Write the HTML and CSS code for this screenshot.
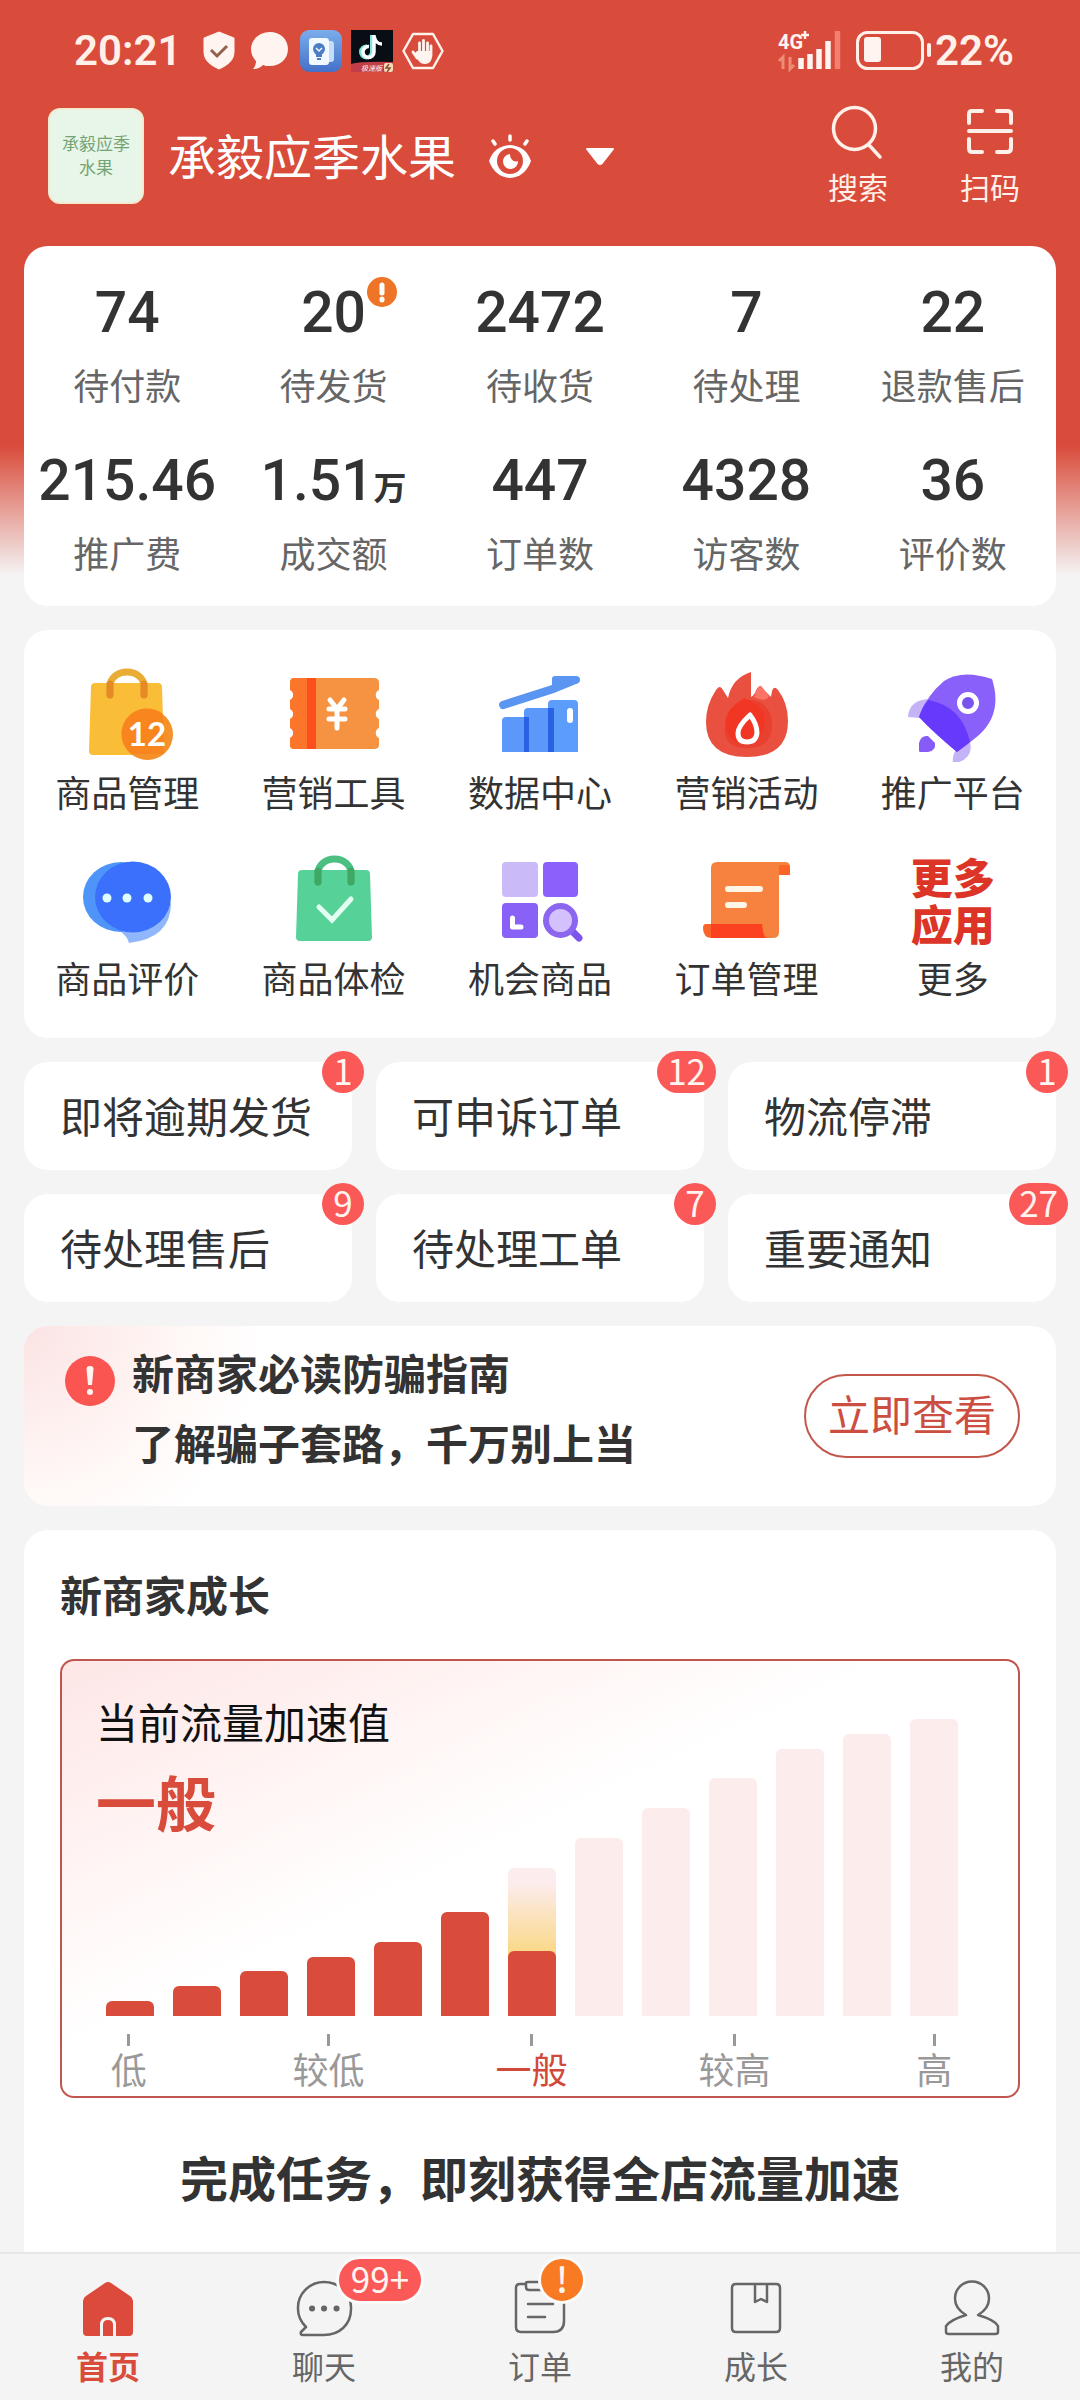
FILE: index.html
```html
<!DOCTYPE html>
<html lang="zh-CN">
<head>
<meta charset="utf-8">
<meta name="viewport" content="width=device-width, initial-scale=1">
<title>承毅应季水果</title>
<link rel="stylesheet" href="styles.css">
</head>
<body>
<div class="page">
  <div class="status">
    <span class="status-time">20:21</span>
    <svg class="status-icon" viewBox="0 0 42 42"><path d="M21 2 36 8v14c0 8-6 13-15 17C12 35 6 30 6 22V8z" fill="#fff4f0" stroke="#fff4f0" stroke-width="1" stroke-linejoin="round"/><path d="m13 20 6 6 10-10" fill="none" stroke="#93604f" stroke-width="3"/></svg>
    <svg class="status-icon" viewBox="0 0 42 42"><path d="M21 2c10 0 18 7 18 17s-8 17-18 17c-3 0-5 0-7-1-3 3-6 4-10 4 2-2 3-5 3-8-3-3-5-7-5-12C2 9 11 2 21 2z" fill="#fff4f0"/></svg>
    <svg class="status-icon" viewBox="0 0 42 42"><defs><linearGradient id="app" x2="0" y2="1"><stop stop-color="#7badeb"/><stop offset="1" stop-color="#4470c8"/></linearGradient></defs><rect width="42" height="42" rx="9" fill="url(#app)"/><path d="M28 11h3q3 0 3 3v15q0 3-3 3h-3z" fill="#c5dcf6"/><rect x="9" y="8" width="20" height="27" rx="3" fill="#f1f8ff"/><circle cx="19" cy="19" r="6" fill="#4b7cc4"/><path d="M16 23h6v4h-6zM17 28h4v2h-4z" fill="#4b7cc4"/><path d="m16 18 3 3 3-3" fill="none" stroke="#f1f8ff" stroke-width="1.5"/></svg>
    <svg class="status-icon" viewBox="0 0 42 42"><path fill="#090d14" d="M0 0h42v42H0z"/><path d="M0 34q10-3 42-2v10H0z" fill="#c33d48"/><path d="M21 5v17a5.500 5.500 0 1 1-5-5.500" fill="none" stroke="#7fe3e0" stroke-width="4"/><path d="M23 5v17a5.500 5.500 0 1 1-5-5.500M23 6c1 5 4 8 8 8" fill="none" stroke="#fff" stroke-width="3.500"/><rect x="33" y="33" width="9" height="9" rx="2" fill="#f8d9b4"/><path d="m38 34-3 4h4l-3 4" fill="none" stroke="#84513d" stroke-width="1.500"/><text x="10" y="41" class="status-tag">极速版</text></svg>
    <svg class="status-icon" viewBox="0 0 42 42"><path d="m11 4h20l9.500 17L31 38H11L1.500 21z" fill="none" stroke="#fff0ea" stroke-width="2.500" stroke-linejoin="round"/><path d="M15 28 11 22M17.500 24V13M21.500 23V10.500M25.500 24V13M29 26V16" stroke="#fff4f0" stroke-width="2.800" stroke-linecap="round"/><path d="M15 21h15v5c0 5-3 8-7 8-3 0-5-1-7-4l-4-6z" fill="#fff4f0"/></svg>
    <span class="spacer"></span>
    <svg class="status-signal" viewBox="0 0 64 42"><text x="0" y="19" class="signal-text">4G</text><path d="M27 1v8M23 5h8" stroke="#fff4f0" stroke-width="2.500"/><path d="M5 39V27l-4 4M12 27v12l4-4" fill="none" stroke="#ee8c77" stroke-width="3"/><path d="M23 28v11M32 24v15M41 19v20M50 11v28" stroke="#fff4f0" stroke-width="5.500"/><path d="M59.500 1v38" stroke="#f27f70" stroke-width="5.500"/></svg>
    <svg class="status-battery" viewBox="0 0 78 42"><rect x="1.500" y="2.500" width="65" height="36" rx="10" fill="none" stroke="#fff0ea" stroke-width="3"/><rect x="8" y="7" width="17" height="25" rx="3" fill="#fff4f0"/><path d="M73 15v10" stroke="#fff0ea" stroke-width="4" stroke-linecap="round"/></svg>
    <span class="status-level">22%</span>
  </div>

  <header class="shop">
    <div class="avatar">承毅应季水果</div>
    <h1 class="shop-name">承毅应季水果</h1>
    <button class="plain eye" aria-label="隐藏数据"><svg viewBox="0 0 48 48"><path d="M3 29Q8 14 24 13q16 1 21 16-6 16-21 17Q9 45 3 29z" fill="#fff"/><circle cx="24" cy="29" r="13" fill="#d94b3a"/><path d="M24 22a7.500 7.500 0 1 0 8 7c-4 2-8-2-8-7z" fill="#fff"/><path d="M24 4v4M7 9l2 3M41 9l-2 3" stroke="#fff" stroke-width="3.500" stroke-linecap="round"/></svg></button>
    <button class="plain caret" aria-label="切换店铺"><svg viewBox="0 0 36 36"><path d="M5 11h26L20 25q-2 2-4 0z" fill="#fff" stroke="#fff" stroke-width="2" stroke-linejoin="round"/></svg></button>
    <span class="spacer"></span>
    <button class="plain action"><svg viewBox="0 0 60 60"><circle cx="26.500" cy="26.500" r="21" fill="none" stroke="#fff0ea" stroke-width="3.500"/><path d="m41 43 11 12" stroke="#fff0ea" stroke-width="3.500" stroke-linecap="round"/></svg>搜索</button>
    <button class="plain action"><svg viewBox="0 0 60 60"><path d="M9 21V12q0-3 3-3h10M37 9h10q4 0 4 3v9M9 37v9q0 4 3 4h10M37 50h10q4 0 4-4v-9M9 29h42" fill="none" stroke="#fff0ea" stroke-width="4" stroke-linecap="round"/></svg>扫码</button>
  </header>

  <main class="content">
    <section class="card stats">
      <a class="stat" href="#"><b>74</b><span>待付款</span></a>
      <a class="stat" href="#"><b>20<svg class="stat-alert" viewBox="0 0 30 30"><circle cx="15" cy="15" r="15" fill="#ee7427"/><path d="M15 8v8M15 22v1" stroke="#fff" stroke-width="5" stroke-linecap="round"/></svg></b><span>待发货</span></a>
      <a class="stat" href="#"><b>2472</b><span>待收货</span></a>
      <a class="stat" href="#"><b>7</b><span>待处理</span></a>
      <a class="stat" href="#"><b>22</b><span>退款售后</span></a>
      <a class="stat" href="#"><b>215.46</b><span>推广费</span></a>
      <a class="stat" href="#"><b>1.51<small>万</small></b><span>成交额</span></a>
      <a class="stat" href="#"><b>447</b><span>订单数</span></a>
      <a class="stat" href="#"><b>4328</b><span>访客数</span></a>
      <a class="stat" href="#"><b>36</b><span>评价数</span></a>
    </section>

    <nav class="card apps">
      <a class="app" href="#"><svg viewBox="0 0 96 96"><path d="M16 17h63q4 0 4 4l2 64q0 4-4 4H14q-4 0-4-4l2-64q0-4 4-4z" fill="#f9bd38"/><path d="M31 29V20a17 14 0 0 1 34 0v9" fill="none" stroke="#e9ac35" stroke-width="7" stroke-linecap="round"/><path d="M31 18v11M65 18v11" stroke="#e58a24" stroke-width="7" stroke-linecap="round"/><circle cx="68.500" cy="68.500" r="25.500" fill="#f4912a"/><path d="M84 48 85 88H52A25.500 25.500 0 0 1 84 48z" fill="#f8851e"/><text x="68" y="80" class="icon-number">12</text></svg>商品管理</a>
      <a class="app" href="#"><svg viewBox="0 0 96 96"><path d="M8 12h80q5 0 5 5v7a5.500 5.500 0 0 0 0 10v9a5.500 5.500 0 0 0 0 10v9a5.500 5.500 0 0 0 0 10v7q0 4-5 4H8q-4 0-4-4v-7a5.500 5.500 0 0 0 0-10v-9a5.500 5.500 0 0 0 0-10v-9a5.500 5.500 0 0 0 0-10v-7q0-5 4-5z" fill="#f69342"/><path d="M8 12h18v71H8q-4 0-4-4v-7a5.500 5.500 0 0 0 0-10v-9a5.500 5.500 0 0 0 0-10v-9a5.500 5.500 0 0 0 0-10v-7q0-5 4-5z" fill="#fb752a"/><path d="M21 12h9v71h-9z" fill="#fc4f1e"/><path d="m44 34 7 9 7-9M51 43v19M43 43h16M43 53h16" fill="none" stroke="#fff" stroke-width="5" stroke-linecap="round" stroke-linejoin="round"/></svg>营销工具</a>
      <a class="app" href="#"><svg viewBox="0 0 96 96"><path d="M10 35 60 19V13q0-3 3-3h21q4 0 4 4 0 3-4 4L62 27 12 43q-4 1-5-4 0-3 3-4z" fill="#5b95f2"/><path d="M14 51h23v35H10V55q0-4 4-4z" fill="#5c98fa"/><path d="M36 42h25v44H32V46q0-4 4-4z" fill="#5c98fa"/><path d="M60 34h22q4 0 4 4v48H56V38q0-4 4-4z" fill="#5c9cfa"/><path d="M32 51h5v35h-5zM56 42h6v44h-6z" fill="#2a62e6"/><path d="M78 45v9" stroke="#fff" stroke-width="6" stroke-linecap="round"/></svg>数据中心</a>
      <a class="app" href="#"><svg viewBox="0 0 96 96"><path d="M53 6v24q0 4 9 5 12 0 12-10 2-6 6-1 10 13 10 31 0 36-41 36T8 56q0-17 10-32 4-6 7 0l5 8Q34 12 53 6z" fill="#ea5040"/><path d="M52 32q2-1 5-5 3-8 6-6l9 9 1 8H52z" fill="#ea5040"/><path d="M56 31q5-15 8-10l7 9q-3 7-15 1z" fill="#fc7468"/><path d="M56 34q18 5 18 25 0 23-25 23T27 60q0-18 16-24 6-2 13-2z" fill="#e9402f"/><path d="M46 32q25 9 20 28-3 18-17 18-20 0-21-20-1-14 18-26z" fill="#f13623"/><path d="M52 49q-12 11-12 18 0 9 9 9t10-9q0-9-7-18z" fill="none" stroke="#fff" stroke-width="5" stroke-linejoin="round"/></svg>营销活动</a>
      <a class="app" href="#"><svg viewBox="0 0 96 96"><path d="M3 51Q4 33 26 33L15 52zM48 97q-2-16 17-21 4 16-14 21z" fill="#c5b3f8"/><path d="M87 13q11 34-13 56-12 10-22 17Q28 66 14 51 22 29 39 15 57 3 87 13z" fill="#8961fa"/><path d="M23 34q34 6 42 42l-13 10Q28 66 14 51q3-10 9-17z" fill="#6639fd"/><circle cx="63" cy="37" r="8.500" fill="#7953ee" stroke="#fff" stroke-width="5"/><path d="M14 85V77q2-8 9-7l7 7q1 8-7 9h-7q-2 0-2-1z" fill="#865bf7"/></svg>推广平台</a>
      <a class="app" href="#"><svg viewBox="0 0 96 96"><path d="M42 80q6 4 8 11 42-5 42-40L60 75z" fill="#90b7fb"/><ellipse cx="42" cy="45" rx="38" ry="35" fill="#4f94f9"/><ellipse cx="54" cy="45" rx="38" ry="35.500" fill="#3a70fc"/><circle cx="28" cy="46" r="4.500" fill="#e0ffff"/><circle cx="48" cy="46" r="4.500" fill="#e0ffff"/><circle cx="69" cy="46" r="4.500" fill="#e0ffff"/></svg>商品评价</a>
      <a class="app" href="#"><svg viewBox="0 0 96 96"><path d="M16 18h64q4 0 4 4l2 63q0 4-4 4H14q-4 0-4-4l2-63q0-4 4-4z" fill="#56d298"/><path d="M32 30V21a16.500 14 0 0 1 33 0v9" fill="none" stroke="#4bc082" stroke-width="7" stroke-linecap="round"/><path d="M32 19v11M65 19v11" stroke="#3fa864" stroke-width="7" stroke-linecap="round"/><path d="m33 55 13 13 19-21" fill="none" stroke="#e2fff1" stroke-width="5" stroke-linecap="round"/></svg>商品体检</a>
      <a class="app" href="#"><svg viewBox="0 0 96 96"><rect x="10" y="10" width="36" height="35" rx="4" fill="#cabbf8"/><rect x="51" y="10" width="35" height="35" rx="4" fill="#8b60fb"/><rect x="10" y="51" width="36" height="35" rx="4" fill="#8961f7"/><path d="M20.500 66v9H29" fill="none" stroke="#fff" stroke-width="5" stroke-linecap="round" stroke-linejoin="round"/><path d="m80 79 7 7" stroke="#7d55ec" stroke-width="7" stroke-linecap="round"/><circle cx="68.500" cy="68.500" r="14.500" fill="#d3c0fc" stroke="#8c66ee" stroke-width="6"/></svg>机会商品</a>
      <a class="app" href="#"><svg viewBox="0 0 96 96"><path d="M19 10h68q5 0 5 5v8H81v57q0 6-6 6H13V16q0-6 6-6z" fill="#f7823f"/><path d="M81 13h9q2 0 2 3v7H81z" fill="#fb6426"/><path d="M8 72h56q1 14 8 14H14Q5 86 5 76q0-4 3-4z" fill="#fb642b"/><path d="M13 72h51q1 14 4 14H13z" fill="#fc4120"/><path d="M30 37h32M30 53h16" stroke="#fff6e8" stroke-width="6" stroke-linecap="round"/></svg>订单管理</a>
      <a class="app" href="#"><span class="app-word">更多<br>应用</span>更多</a>
    </nav>

    <nav class="todos">
      <a class="todo" href="#">即将逾期发货<span class="badge">1</span></a>
      <a class="todo" href="#">可申诉订单<span class="badge">12</span></a>
      <a class="todo" href="#">物流停滞<span class="badge">1</span></a>
      <a class="todo" href="#">待处理售后<span class="badge">9</span></a>
      <a class="todo" href="#">待处理工单<span class="badge">7</span></a>
      <a class="todo" href="#">重要通知<span class="badge">27</span></a>
    </nav>

    <section class="card notice">
      <svg class="notice-icon" viewBox="0 0 50 50"><circle cx="25" cy="25" r="25" fill="#fb5552"/><path d="M21.500 13a3.500 3 0 0 1 7 0L27 29h-4z" fill="#fff4f0"/><circle cx="25" cy="36" r="3" fill="#fff4f0"/></svg>
      <p class="notice-text">新商家必读防骗指南<br>了解骗子套路，千万别上当</p>
      <button class="notice-button">立即查看</button>
    </section>

    <section class="card growth">
      <h2>新商家成长</h2>
      <div class="chart">
        <div class="chart-head">
          <p>当前流量加速值</p>
          <strong>一般</strong>
        </div>
        <div class="bars">
          <i class="bar on" style="height:5%"></i>
          <i class="bar on" style="height:10%"></i>
          <i class="bar on" style="height:15%"></i>
          <i class="bar on" style="height:20%"></i>
          <i class="bar on" style="height:25%"></i>
          <i class="bar on" style="height:35%"></i>
          <i class="bar now" style="height:50%"><i class="bar on" style="height:44%"></i></i>
          <i class="bar" style="height:60%"></i>
          <i class="bar" style="height:70%"></i>
          <i class="bar" style="height:80%"></i>
          <i class="bar" style="height:90%"></i>
          <i class="bar" style="height:95%"></i>
          <i class="bar" style="height:100%"></i>
        </div>
        <div class="axis">
          <span>低</span>
          <span>较低</span>
          <span class="current">一般</span>
          <span>较高</span>
          <span>高</span>
        </div>
      </div>
      <h3>完成任务，即刻获得全店流量加速</h3>
    </section>
  </main>

  <nav class="tabs">
    <a class="tab active" href="#"><svg viewBox="0 0 60 60"><path d="M27 4q3-2 6 0l19 13q3 2 3 5v31q0 4-4 4H38V46q0-8-8-8t-8 8v11H9q-4 0-4-4V22q0-3 3-5z" fill="#db4a3a"/><path d="M25 57V46q0-5 5-5t5 5v11z" fill="#db4a3a"/></svg>首页</a>
    <a class="tab" href="#"><svg viewBox="0 0 60 60" class="line"><path d="M30 3a27 26 0 0 1 27 27c0 16-12 26-27 26H9q-3 0-2-3l5-5q-8-8-8-18A26 26 0 0 1 30 3z"/><path d="M18 29.500h.1M30 29.500h.1M42.500 29.500h.1" class="dots"/></svg><span class="badge">99+</span>聊天</a>
    <a class="tab" href="#"><svg viewBox="0 0 60 60" class="line"><path d="M16 5h-6q-4 0-4 4v39q0 5 5 5h32q11 0 11-11V5H44M16 4q0-1 2-1h26v8H19q-3 0-3-3zM18 25h25M18 38h17"/></svg><span class="badge warn">!</span>订单</a>
    <a class="tab" href="#"><svg viewBox="0 0 60 60" class="line"><path d="M10 5h40q4 0 4 4v40q0 4-4 4H10q-4 0-4-4V9q0-4 4-4zM29 5v18l6-3 6 3V5"/></svg>成长</a>
    <a class="tab" href="#"><svg viewBox="0 0 60 60" class="line"><path d="M24 36C17 32 13 27 13 19.500a17 17 0 0 1 34 0C47 27 43 32 36 36q17 5 20 11v6q0 2-3 2H7q-3 0-3-2v-6q4-6 20-11z"/></svg>我的</a>
  </nav>
</div>
</body>
</html>
```
FILE: styles.css
```css
* { box-sizing: border-box; }

body {
  margin: 0;
  background: #f4f4f4;
  color: #333;
  font-family: "Noto Sans CJK SC", sans-serif;
  font-size: 36px;
}

a { color: inherit; text-decoration: none; }
h1, h2, h3, p { margin: 0; }
svg { display: block; }

.page {
  display: flex;
  flex-direction: column;
  min-height: 100vh;
  background: linear-gradient(#d94b3a 0, #d94b3a 445px, #f4f4f4 575px);
}

.spacer { flex: 1; }

.plain {
  padding: 0;
  border: 0;
  background: none;
  color: inherit;
  font: inherit;
}

/* phone status bar */
.status {
  display: flex;
  align-items: center;
  gap: 9px;
  height: 102px;
  padding: 0 66px 0 74px;
  color: #fff0ea;
}

.status-time,
.status-level {
  font: 600 42px/60px "Roboto", sans-serif;
}
.status-time { margin-right: 8px; }
.status-icon { width: 42px; height: 42px; }
.status-signal { width: 64px; height: 42px; margin-right: 5px; }
.status-battery { width: 78px; height: 42px; margin-right: -8px; }
.status-tag { font-size: 7px; font-style: italic; fill: #fff; }
.signal-text { font: 700 20px "Roboto", sans-serif; fill: #fff4f0; }

/* shop header */
.shop {
  display: flex;
  align-items: center;
  height: 144px;
  padding: 0 60px 36px 48px;
  color: #fff;
}

.avatar {
  display: grid;
  place-items: center;
  width: 96px;
  height: 96px;
  padding: 0 12px 3px;
  border: 2px solid #f3ead2;
  border-radius: 12px;
  background: #e8f5e9;
  color: #72a474;
  font-size: 17px;
  line-height: 24px;
  text-align: center;
}

.shop-name {
  margin-left: 24px;
  padding-bottom: 4px;
  font-size: 48px;
  font-weight: 400;
  line-height: 60px;
  white-space: nowrap;
}

.eye { width: 48px; margin-left: 30px; }
.caret { width: 36px; margin-left: 48px; }

.action {
  align-self: flex-start;
  width: 60px;
  color: #fff0ea;
  font-size: 30px;
  line-height: 48px;
  white-space: nowrap;
}
.action + .action { margin-left: 72px; }

/* content */
.content {
  display: flex;
  flex: 1;
  flex-direction: column;
  gap: 24px;
  padding: 0 24px;
}

.card { border-radius: 24px; background: #fff; }

.stats {
  display: grid;
  grid-template-columns: repeat(5, 1fr);
  row-gap: 27px;
  padding: 31px 0 20px;
}

.stat {
  display: flex;
  flex-direction: column;
  align-items: center;
  height: 141px;
  color: #666;
  line-height: 54px;
}

.stat b {
  position: relative;
  margin-bottom: 8px;
  color: #333;
  font: 500 57px/72px "Roboto", sans-serif;
  white-space: nowrap;
}
.stat small { font: 700 33px/36px "Noto Sans CJK SC", sans-serif; }
.stat-alert { position: absolute; top: 0; right: -31px; width: 30px; }

.apps {
  display: grid;
  grid-template-columns: repeat(5, 1fr);
  row-gap: 36px;
  padding: 36px 0;
}

.app {
  display: flex;
  flex-direction: column;
  align-items: center;
  gap: 4px;
  line-height: 50px;
  white-space: nowrap;
}
.app svg { width: 96px; height: 96px; }
.icon-number { font: 700 33px "Lato", sans-serif; fill: #fff; text-anchor: middle; }
.app-word {
  height: 96px;
  color: #dc3527;
  font-size: 42px;
  font-weight: 900;
  line-height: 47px;
}

.todos {
  display: grid;
  grid-template-columns: repeat(3, 1fr);
  gap: 24px;
}

.todo {
  position: relative;
  padding: 23px 36px 25px;
  border-radius: 24px;
  background: #fff;
  font-size: 42px;
  line-height: 60px;
  white-space: nowrap;
}

.badge {
  position: absolute;
  min-width: 42px;
  height: 42px;
  padding: 0 10px;
  border-radius: 21px;
  background: #fb5858;
  color: #fff4f0;
  font-size: 35px;
  font-weight: 400;
  line-height: 38px;
  text-align: center;
}
.todo .badge { top: -11px; right: -12px; }

.notice {
  display: flex;
  align-items: center;
  height: 180px;
  padding: 0 36px;
  background: radial-gradient(circle at 0 0, #fbe3e3 0, #fff8f6 160px, #fff 240px);
}
.notice-icon { width: 50px; margin: 0 17px 70px 5px; }
.notice-text {
  flex: 1;
  margin-bottom: 18px;
  font-size: 42px;
  font-weight: 700;
  line-height: 70px;
}
.notice-button {
  width: 216px;
  height: 84px;
  padding: 0 0 6px;
  border: 2px solid #c4574c;
  border-radius: 42px;
  background: #fff;
  color: #cc4e40;
  font: 400 42px/60px "Noto Sans CJK SC", sans-serif;
}

.growth {
  flex: 1;
  padding: 33px 36px 40px;
  border-radius: 24px 24px 0 0;
}
.growth h2 { font-size: 42px; line-height: 62px; }
.growth h3 {
  margin-top: 46px;
  font-size: 48px;
  line-height: 64px;
  text-align: center;
}

.chart {
  display: grid;
  grid-template-rows: auto auto;
  margin-top: 34px;
  padding: 28px 51px 4px 34px;
  border: 2px solid #c0574f;
  border-radius: 14px;
  background: linear-gradient(155deg, #fde6e6 0, #fff5f4 25%, #fff 44%);
}

.chart-head { grid-area: 1 / 1; }
.chart-head p { color: #111; font-size: 42px; line-height: 64px; }
.chart-head strong { display: block; color: #d94b3a; font-size: 60px; line-height: 96px; }

.bars {
  display: grid;
  grid-area: 1 / 1;
  grid-template-columns: repeat(13, 1fr);
  align-items: end;
  justify-items: center;
  height: 297px;
  margin-top: 30px;
}
.bar {
  display: block;
  width: 48px;
  border-radius: 6px 6px 0 0;
  background: #fcecec;
}
.bar.on { background: #d94b3a; }
.bar.now {
  display: flex;
  align-items: flex-end;
  background: linear-gradient(#fcecee 10%, #fad98a 56%);
}

.axis {
  display: grid;
  grid-template-columns: repeat(13, 1fr);
  margin-top: 18px;
  color: #999;
}
.axis span {
  display: flex;
  grid-row: 1;
  flex-direction: column;
  align-items: center;
  padding-bottom: 2px;
  line-height: 44px;
  white-space: nowrap;
}
.axis span::before { width: 3px; height: 12px; background: #999; content: ""; }
.axis span:nth-child(1) { grid-column: 1; }
.axis span:nth-child(2) { grid-column: 4; }
.axis span:nth-child(3) { grid-column: 7; }
.axis span:nth-child(4) { grid-column: 10; }
.axis span:nth-child(5) { grid-column: 13; }
.axis .current { color: #d0493b; }

/* bottom tab bar */
.tabs {
  position: sticky;
  bottom: 0;
  display: grid;
  grid-template-columns: repeat(5, 1fr);
  padding: 25px 0 12px;
  border-top: 2px solid #e6e6e6;
  background: #f4f4f4;
}
.tab {
  position: relative;
  display: flex;
  flex-direction: column;
  align-items: center;
  gap: 3px;
  color: #666;
  font-size: 32px;
  line-height: 46px;
}
.tab svg { width: 60px; height: 60px; }
.tab.active { color: #d94b3a; font-weight: 700; }
.tab .badge {
  top: -23px;
  left: calc(50% + 12px);
  width: 88px;
  height: 48px;
  padding: 0;
  border: 3px solid #fafafa;
  border-radius: 24px;
}
.tab .badge.warn { left: calc(50% - 2px); width: 48px; background: #f87a22; font-weight: 500; }
.line { fill: none; stroke: #666; stroke-width: 2.500px; stroke-linejoin: round; stroke-linecap: round; }
.dots { stroke-width: 6px; }
```
